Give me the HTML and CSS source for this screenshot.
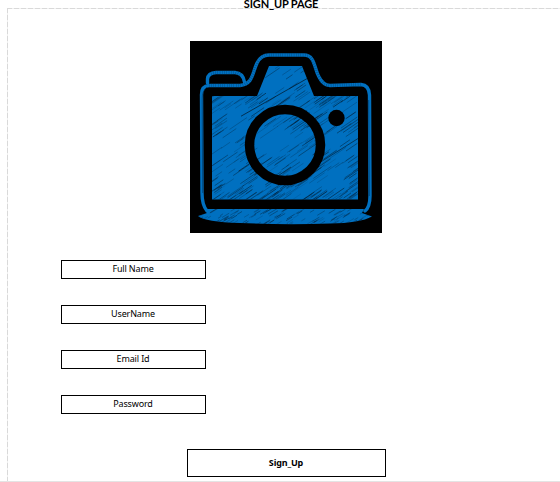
FILE: index.html
```html
<!DOCTYPE html>
<html lang="en">
<head>
<meta charset="utf-8">
<title>Sign up</title>
<link rel="stylesheet" href="styles.css">
</head>
<body>
<main class="page">
<h1 class="title">SIGN_UP PAGE</h1>
<section class="sheet">
<svg class="camera" viewBox="190 41 192 192" aria-hidden="true">
<defs>
<clipPath id="body-clip"><path d="M212 96H257L269 66H302L314 96H358V199.500H212Z"/></clipPath>
<clipPath id="base-clip"><path d="M205 209H364L362 213L372 216.500Q360 223 330 223.500Q285 225 240 223Q205 222 198 216L207 213Z"/></clipPath>
</defs>
<path class="black" d="M190 41H382V233H190Z"/>
<g clip-path="url(#body-clip)"><path class="blue" d="M212 66H358V200H212Z"/><g id="body-hatch" class="hatch"></g></g>
<g clip-path="url(#base-clip)"><path class="blue" d="M198 209H373V226H198Z"/><g id="base-hatch" class="hatch"></g></g>
<circle class="lens" cx="285" cy="145" r="35.500"/>
<circle class="black" cx="336.500" cy="118" r="8.200"/>
<path class="outline" d="M207 211Q202 205 202 193L201.500 96Q201 86 209 85.500L240 85.500C253 84 252 74 257 63Q261 55 269 55H304C315 55 314 68 319 77Q323 85 330 85.500L361 84.500Q369 85 369.500 95L370 196Q370 207 365 211"/>
<path class="outline" d="M207.500 83V79Q208 73 216 72.500H235Q243 73 244.500 82"/>
<path class="gap" d="M202.700 193L202.200 99Q202 91 207 87M368.700 100L369.300 196"/>
<path class="fray" d="M209 85.500H240C253 84 252 74 257 63Q261 55 269 55H304C315 55 314 68 319 77Q323 85 330 85.500L361 84.500M211 73.500L216 72.500H235L241 75"/>
</svg>
<form class="fields">
<div class="field"><span>Full Name</span></div>
<div class="field"><span>UserName</span></div>
<div class="field"><span>Email Id</span></div>
<div class="field"><span>Password</span></div>
</form>
<div class="submit"><span>Sign_Up</span></div>
</section>
</main>
<script src="hatch.js"></script>
</body>
</html>
```
FILE: styles.css
```css
* { box-sizing: border-box; }
body { margin: 0; background: #fff; overflow: hidden; }
.page {
  height: 482px;
  display: flex;
  flex-direction: column;
  border-bottom: 1px solid #e4e4e4;
  font-family: "Noto Sans", "Open Sans", sans-serif;
  color: #000;
}
.title {
  height: 8px;
  margin: 0 0 0 2px;
  font-family: Lato, sans-serif;
  font-size: 11px;
  line-height: 7px;
  letter-spacing: -.15px;
  font-weight: 700;
  text-align: center;
  white-space: nowrap;
}
.sheet {
  flex: 1;
  margin-left: 7px;
  padding-top: 33px;
  background:
    repeating-linear-gradient(90deg, #d9d9d9 0 5px, #f0f0f0 5px 7px) 0 0 / 100% 1px no-repeat,
    repeating-linear-gradient(180deg, #d9d9d9 0 5px, #f0f0f0 5px 7px) 0 0 / 1px 100% no-repeat;
}
.camera { display: block; width: 192px; height: 192px; margin-left: 183px; }
.fields { display: flex; flex-direction: column; gap: 26px; margin: 27px 0 0 54px; }
.field, .submit {
  display: flex;
  align-items: center;
  justify-content: center;
  border: 1px solid #000;
  white-space: nowrap;
}
.field { width: 145px; height: 19px; font-size: 9px; line-height: 14px; letter-spacing: -.15px; padding: 0 1px 2px 0; }
.submit { width: 199px; height: 28px; margin: 35px 0 0 180px; padding: 0 1px 2px 0; font-size: 9px; font-weight: 700; letter-spacing: -.15px; }
.black { fill: #000; }
.blue { fill: #0070c0; }
.lens { fill: none; stroke: #000; stroke-width: 9.5; }
.outline { fill: none; stroke: #0070c0; stroke-width: 3.4; stroke-linecap: round; }
.gap { fill: none; stroke: #00345a; stroke-width: .6; }
.fray { fill: none; stroke: #003158; stroke-width: 3.4; stroke-dasharray: .25 2; }
.hatch { fill: none; stroke: #001524; }
```
FILE: hatch.js
```js
// Pencil streaks, sparse through the middle of the camera and dense at its edges.
let seed = 417;
function random() {
  seed = (seed * 1664525 + 1013904223) % 4294967296;
  return seed / 4294967296;
}
function streak(group, x, y, length, width, slope) {
  const path = document.createElementNS("http://www.w3.org/2000/svg", "path");
  path.setAttribute("d", `M${x - length / 2} ${y + length * slope / 2}l${length} ${-length * slope}`);
  path.setAttribute("stroke-width", width);
  path.setAttribute("opacity", 0.3 + random() * 0.5);
  group.append(path);
}
const body = document.getElementById("body-hatch");
for (let i = 0; i < 1100; i++) {
  const x = 212 + random() * 146;
  const y = 66 + random() * 134;
  const edge = Math.min(x - 212, 358 - x, 200 - y, y < 96 ? 99 : y - 96);
  const distance = Math.hypot(x - 285, y - 145);
  const chance = edge < 10 ? 0.75 : distance > 20 && distance < 48 ? 0.4 : 0.13;
  if (random() < chance) {
    streak(body, x, y, 6 + random() * 12, 0.3 + random() * 0.5, 0.68);
  }
}
streak(body, 335, 153, 65, 0.9, 0.63);
streak(body, 280, 94, 78, 0.9, 0.57);
const base = document.getElementById("base-hatch");
for (let i = 0; i < 110; i++) {
  streak(base, 198 + random() * 174, 209 + random() * 16, 3 + random() * 6, 0.3 + random() * 0.4, 0.6);
}
```
